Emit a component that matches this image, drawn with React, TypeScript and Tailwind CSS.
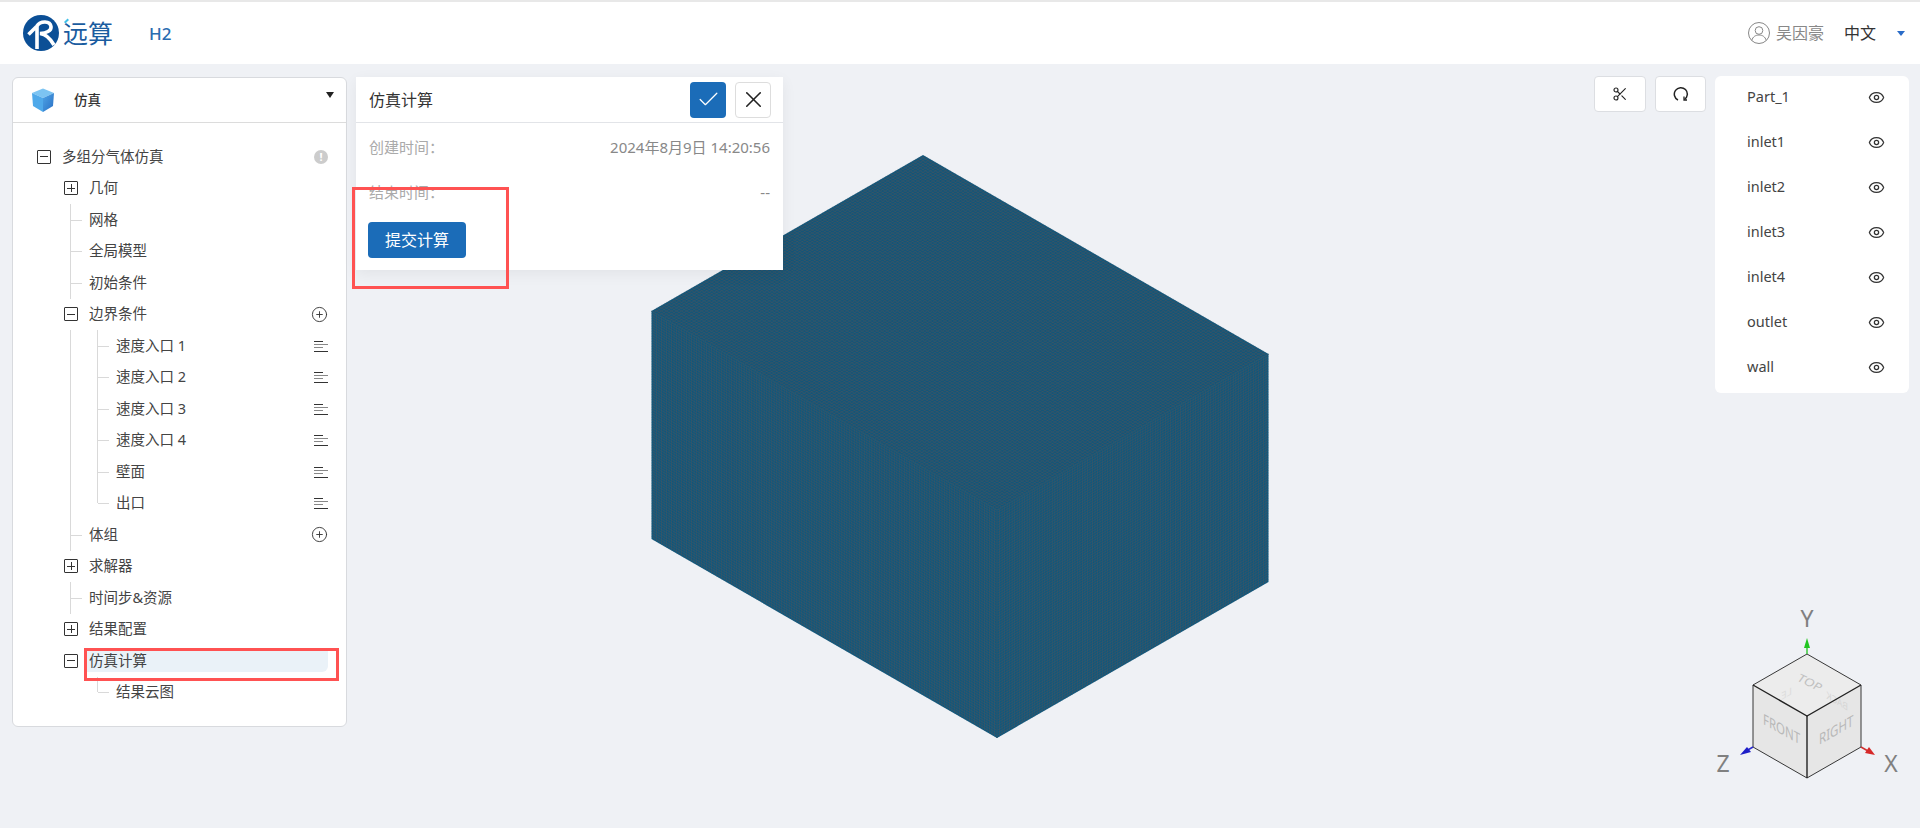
import type { ReactNode } from "react";
import { Check, CirclePlus, Eye, Scissors, X } from "lucide-react";

type Pt = [number, number];

const font = "font-['Noto_Sans','Noto_Sans_CJK_SC',sans-serif]";

function MeshFace({ o, u, v, nu, nv, color }: { o: Pt; u: Pt; v: Pt; nu: number; nv: number; color: string }) {
  const lines: string[] = [];
  for (let i = 1; i < nu; i++) {
    const x = o[0] + (u[0] * i) / nu;
    const y = o[1] + (u[1] * i) / nu;
    lines.push(`M${x.toFixed(2)} ${y.toFixed(2)}L${(x + v[0]).toFixed(2)} ${(y + v[1]).toFixed(2)}`);
  }
  for (let i = 1; i < nv; i++) {
    const x = o[0] + (v[0] * i) / nv;
    const y = o[1] + (v[1] * i) / nv;
    lines.push(`M${x.toFixed(2)} ${y.toFixed(2)}L${(x + u[0]).toFixed(2)} ${(y + u[1]).toFixed(2)}`);
  }
  const b: Pt = [o[0] + u[0], o[1] + u[1]];
  const c: Pt = [b[0] + v[0], b[1] + v[1]];
  const d: Pt = [o[0] + v[0], o[1] + v[1]];
  return (
    <g>
      <polygon points={[o, b, c, d].map((p) => p.join(",")).join(" ")} fill={color} />
      <path d={lines.join("")} stroke="#55545a" strokeWidth="0.42" fill="none" />
    </g>
  );
}

function MeshBlock() {
  return (
    <svg className="absolute left-0 top-[-64px]" width="1920" height="828" viewBox="0 0 1920 828">
      <MeshFace o={[923, 155]} u={[345.5, 199]} v={[-271.5, 156]} nu={138} nv={108} color="#12567a" />
      <MeshFace o={[651.5, 311]} u={[345.5, 199]} v={[0, 228]} nu={138} nv={90} color="#0e587e" />
      <MeshFace o={[997, 510]} u={[271.5, -156]} v={[0, 228]} nu={108} nv={90} color="#0e587e" />
      {/* hides the seam where the faces meet */}
      <path d="M651.5 311L997 510L1268.5 354M997 510V738" stroke="#29566e" strokeWidth="1.4" fill="none" />
    </svg>
  );
}

function Logo() {
  return (
    <svg width="36" height="36" viewBox="0 0 36 36">
      <circle cx="18" cy="18" r="18" fill="#0b4f96" />
      <path
        d="M5.5 19.5 L14 11 L14 34 M14 11 C17 6 27 5 28 11.5 C28.7 16 23 18 17 18.5 C22 19 27 23 31 30"
        fill="none"
        stroke="#fff"
        strokeWidth="3.6"
      />
    </svg>
  );
}

function CubeIcon() {
  return (
    <svg width="24" height="24" viewBox="0 0 24 24">
      <defs>
        <linearGradient id="cubeSide" x1="0" y1="0" x2="1" y2="1">
          <stop offset="0" stopColor="#4ea4e6" />
          <stop offset="1" stopColor="#2a6fc4" />
        </linearGradient>
      </defs>
      <polygon points="12,0.5 23,5 12,10 1,5" fill="#7cc4f2" />
      <polygon points="1,5 12,10 12,24 2,18" fill="#4fa9ea" />
      <polygon points="23,5 12,10 12,24 22,18" fill="url(#cubeSide)" />
    </svg>
  );
}

function Toggle({ open }: { open: boolean }) {
  return (
    <span className="relative flex h-[14px] w-[14px] items-center justify-center rounded-[1px] border border-[#333] bg-white">
      <span className="absolute h-px w-2 bg-[#333]" />
      {!open && <span className="absolute h-2 w-px bg-[#333]" />}
    </span>
  );
}

function ListIcon() {
  return (
    <svg width="14" height="14" viewBox="0 0 14 14" stroke="#333" strokeWidth="1">
      <path d="M0 2.500H9" />
      <path d="M0 5.500H14" stroke="#888" />
      <path d="M0 8.500H9" stroke="#888" />
      <path d="M0 12.500H14" />
    </svg>
  );
}

function PlusIcon() {
  return <CirclePlus size={17} strokeWidth={1.3} className="text-[#333]" />;
}

function RedoIcon() {
  return (
    <svg width="16" height="16" viewBox="0 0 16 16" fill="none" stroke="#222" strokeWidth="1.500">
      <path d="M5 14A6.500 6.500 0 1 1 11.500 13.500" />
      <path d="M11 10.500V14H14" strokeWidth="1.300" />
    </svg>
  );
}

function InfoIcon() {
  return (
    <span className="flex h-[14px] w-[14px] items-center justify-center rounded-full bg-[#ccc] text-[11px] font-bold leading-none text-white">
      !
    </span>
  );
}

// guide lines of the tree
function Vert({ x, half }: { x: "l1" | "l2"; half?: boolean }) {
  return (
    <span
      className={`absolute top-0 w-px bg-[#d9d9d9] ${x === "l1" ? "left-[57px]" : "left-[84px]"} ${half ? "h-1/2" : "h-full"}`}
    />
  );
}

function Horiz({ x }: { x: "l1" | "l2" }) {
  return (
    <span className={`absolute top-1/2 h-px w-[11px] bg-[#d9d9d9] ${x === "l1" ? "left-[58px]" : "left-[85px]"}`} />
  );
}

function Leaf({ label, right }: { label: string; right?: ReactNode }) {
  return (
    <div className="relative flex h-[31.5px] items-center pl-[76px] pr-[18px]">
      <Vert x="l1" />
      <Horiz x="l1" />
      <span className="flex-1 text-[14.5px] text-[#444]">{label}</span>
      {right}
    </div>
  );
}

function SubLeaf({ label, last, inner, noMenu }: { label: string; last?: boolean; inner?: boolean; noMenu?: boolean }) {
  return (
    <div className="relative flex h-[31.5px] items-center pl-[103px] pr-[18px]">
      {inner && <Vert x="l1" />}
      <Vert x="l2" half={last} />
      <Horiz x="l2" />
      <span className="flex-1 text-[14.5px] text-[#444]">{label}</span>
      {!noMenu && <ListIcon />}
    </div>
  );
}

function Branch({ label, open, right }: { label: string; open: boolean; right?: ReactNode }) {
  return (
    <div className="flex h-[31.5px] items-center pl-[51px] pr-[18px]">
      <Toggle open={open} />
      <span className="ml-[11px] flex-1 text-[14.5px] text-[#444]">{label}</span>
      {right}
    </div>
  );
}

function Tree() {
  return (
    <div className="pt-[18px]">
      <div className="flex h-[31.5px] items-center pl-[24px] pr-[18px]">
        <Toggle open />
        <span className="ml-[11px] flex-1 text-[14.5px] text-[#444]">多组分气体仿真</span>
        <InfoIcon />
      </div>
      <Branch label="几何" open={false} />
      <Leaf label="网格" />
      <Leaf label="全局模型" />
      <Leaf label="初始条件" />
      <Branch label="边界条件" open right={<PlusIcon />} />
      {["速度入口 1", "速度入口 2", "速度入口 3", "速度入口 4", "壁面"].map((n) => (
        <SubLeaf key={n} label={n} inner />
      ))}
      <SubLeaf label="出口" inner last />
      <Leaf label="体组" right={<PlusIcon />} />
      <Branch label="求解器" open={false} />
      <Leaf label="时间步&资源" />
      <Branch label="结果配置" open={false} />
      <div className="flex h-[31.5px] items-center pl-[51px] pr-[18px]">
        <Toggle open />
        <span className="ml-[9px] flex h-[23px] flex-1 items-center rounded-br-md bg-[#eaf2f8] pl-[2px] text-[14.5px] text-[#444]">
          仿真计算
        </span>
      </div>
      <SubLeaf label="结果云图" last noMenu />
    </div>
  );
}

function Gizmo() {
  return (
    <svg className="absolute left-[1700px] top-[590px]" width="220" height="214" viewBox="1700 590 220 214">
      <polygon points="1807,654 1861,685 1807,716 1753,685" fill="#ececec" />
      <polygon points="1753,685 1807,716 1807,778 1753,747" fill="#e6e6e6" />
      <polygon points="1861,685 1807,716 1807,778 1861,747" fill="#e6e6e6" />
      <g fontFamily="'Noto Sans',sans-serif" fontSize="11.5">
        <text transform="matrix(-0.85,-0.5,0,1,1848,711)" fontSize="10" fill="#d6d6d6">BACK</text>
        <text transform="matrix(-1,0.55,0,1,1792,694)" fontSize="10" fill="#dcdcdc">LE</text>
        <text transform="matrix(1,0.5,-0.55,0.75,1796,680)" fontSize="12" fill="#c0c0c0">TOP</text>
        <text transform="matrix(1,0.55,0,1.3,1763,724)" fill="#b8b8b8">FRONT</text>
        <text transform="matrix(1,-0.577,0,1.3,1819,745)" fill="#b8b8b8">RIGHT</text>
      </g>
      <g stroke="#222" fill="none">
        <path d="M1753 685L1807 716L1861 685" strokeWidth="1.400" />
        <path d="M1807 716V778" strokeWidth="1.400" />
        <path d="M1807 654L1861 685V747L1807 778L1753 747V685Z" strokeWidth="0.900" />
      </g>
      <path d="M1807 654V643" stroke="#3cc83c" strokeWidth="1.500" />
      <polygon points="1807,638 1810,648 1804,648" fill="#22c522" />
      <path d="M1753 747L1746 751" stroke="#2a2ad0" strokeWidth="1.500" />
      <polygon points="1740,755 1747,747 1751,752" fill="#1e1ec8" />
      <path d="M1861 747L1868 751" stroke="#d03030" strokeWidth="1.500" />
      <polygon points="1875,755 1865,753 1869,747" fill="#d62828" />
      <g fontFamily="'Noto Sans',sans-serif" fill="#808080" fontSize="23">
        <text x="1807" y="627" textAnchor="middle">Y</text>
        <text x="1723" y="772" textAnchor="middle">Z</text>
        <text x="1891" y="772" textAnchor="middle">X</text>
      </g>
    </svg>
  );
}

export default function App() {
  const parts = ["Part_1", "inlet1", "inlet2", "inlet3", "inlet4", "outlet", "wall"];

  return (
    <div className={`relative flex h-screen w-full flex-col overflow-hidden bg-[#eff1f5] ${font}`}>
      {/* header */}
      <header className="flex h-16 shrink-0 items-center border-t-2 border-[#e8e8e8] bg-white pl-[23px] pr-[15px]">
        <Logo />
        <span className="relative ml-1 text-[25px] leading-none text-[#1a5c9f]">
          远算
          <span className="absolute left-[1px] top-[-1px] h-[2px] w-[5px] -rotate-45 bg-[#3fc0e8]" />
        </span>
        <span className="ml-[36px] mt-[2px] text-[17px] font-medium text-[#2a6cb0]">H2</span>
        <div className="ml-auto flex items-center">
          <svg width="24" height="24" viewBox="0 0 24 24" fill="none" stroke="#888" strokeWidth="1">
            <circle cx="12" cy="12" r="10.500" />
            <circle cx="12" cy="9.500" r="3.800" />
            <path d="M4.800 19.500c1-4 4-5.500 7.200-5.500s6.200 1.500 7.200 5.500" />
          </svg>
          <span className="ml-[5px] text-base text-[#888]">吴因豪</span>
          <span className="ml-5 text-base text-[#333]">中文</span>
          <span className="ml-[21px] h-0 w-0 border-x-[4.5px] border-t-[5px] border-x-transparent border-t-[#2a6cc8]" />
        </div>
      </header>

      {/* workspace */}
      <main className="relative flex flex-1 items-start pl-3 pr-[11px] pt-3">
        <MeshBlock />

        <aside className="relative mt-px h-[650px] w-[335px] shrink-0 rounded-md border border-[#d8dade] bg-white">
          <div className="flex h-[45px] items-center rounded-t-md border-b border-[#dcdcdc] pl-[18px] pr-3">
            <CubeIcon />
            <span className="ml-[19px] flex-1 text-[13.5px] font-medium text-[#333]">仿真</span>
            <span className="mb-[11px] h-0 w-0 border-x-[4.5px] border-t-[6px] border-x-transparent border-t-[#222]" />
          </div>
          <Tree />
        </aside>

        <section className="relative ml-[9px] mt-px w-[427px] bg-white shadow-[0_4px_14px_rgba(0,0,0,0.06)]">
          <div className="flex h-[46px] items-center border-b border-[#e2e4e8] pl-[13px] pr-[12px]">
            <span className="flex-1 text-base text-[#333]">仿真计算</span>
            <button className="flex h-9 w-9 items-center justify-center rounded-[4px] bg-[#1b6cb8] text-white">
              <Check size={25} strokeWidth={1.2} />
            </button>
            <button className="ml-[9px] flex h-9 w-9 items-center justify-center rounded-[4px] border border-[#ddd] bg-white text-[#222]">
              <X size={27} strokeWidth={1.4} />
            </button>
          </div>
          <div className="flex h-[45px] mt-[2px] items-center justify-between px-[13px] text-[15px]">
            <span className="text-[#aaa]">创建时间：</span>
            <span className="text-[#888]">2024年8月9日 14:20:56</span>
          </div>
          <div className="flex h-[45px] items-center justify-between px-[13px] text-[15px]">
            <span className="text-[#aaa]">结束时间：</span>
            <span className="text-[#888]">--</span>
          </div>
          <div className="px-3 pb-3 pt-[7px]">
            <button className="flex h-9 w-[98px] items-center justify-center rounded-[4px] bg-[#1b6cb8] text-base text-white">
              提交计算
            </button>
          </div>
        </section>

        <div className="relative ml-auto flex items-start">
          <button className="flex h-9 w-[52px] items-center justify-center rounded-[4px] border border-[#dcdee2] bg-white text-[#222]">
            <Scissors size={16} strokeWidth={1.7} />
          </button>
          <button className="ml-[9px] flex h-9 w-[51px] items-center justify-center rounded-[4px] border border-[#dcdee2] bg-white">
            <RedoIcon />
          </button>
          <div className="ml-[9px] w-[194px] rounded-md bg-white pb-[3.5px]">
            <ul className="-mt-[1.5px]">
              {parts.map((p) => (
                <li key={p} className="flex h-[45px] items-center pl-8 pr-[24px] text-[14.5px] text-[#444]">
                  <span className="flex-1">{p}</span>
                  <Eye size={17} strokeWidth={1.8} className="text-[#333]" />
                </li>
              ))}
            </ul>
          </div>
        </div>

        <div className="absolute left-0 top-0">
          <div className="absolute left-[352px] top-[123px] h-[102px] w-[157px] border-[3px] border-[#ff5252]" />
          <div className="absolute left-[84px] top-[584px] h-[33px] w-[255px] border-[3px] border-[#ff5252]" />
        </div>
      </main>

      <Gizmo />
    </div>
  );
}
